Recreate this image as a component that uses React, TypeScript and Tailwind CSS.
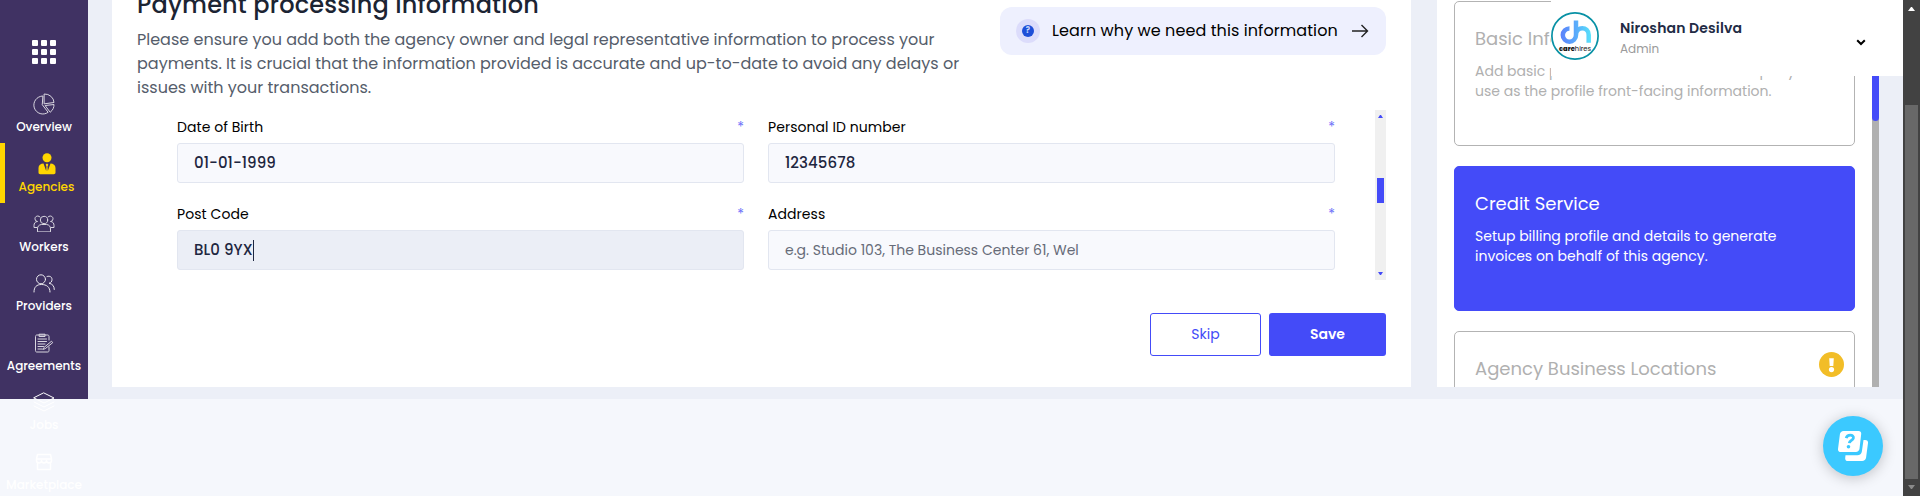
import type { ReactNode } from "react";

function Stroke({ w, h, box, children }: { w: number; h: number; box: string; children: ReactNode }) {
  return (
    <svg width={w} height={h} viewBox={box} fill="none" stroke="currentColor" strokeWidth="1" strokeLinecap="round" strokeLinejoin="round" className="shrink-0">
      {children}
    </svg>
  );
}

const PieIcon = () => (
  <Stroke w={22} h={22} box="0 0 22 22">
    <path d="M9.500 3a9 9 0 1 0 5.600 16.300L9.500 12z" />
    <path d="M11.500 1a9 9 0 0 1 9.500 8.500l-9.500 1.300z" />
    <path d="M12.500 12.500l8.500-1c0 3-1 5.500-3.500 7.500z" />
  </Stroke>
);

const AgentIcon = () => (
  <svg width="18" height="22" viewBox="0 0 18 22" fill="currentColor">
    <circle cx="9" cy="4.700" r="4.500" />
    <path d="M5.500 10.500 8.200 18l.3-4.500-.8-1.800.6-1h1.400l.6 1-.8 1.800.3 4.500 2.700-7.500c2.800 0 5 1.500 5 4.500v4.500c0 1-.7 1.700-1.700 1.700H2.200c-1 0-1.700-.7-1.700-1.700V15c0-3 2.200-4.500 5-4.500z" />
  </svg>
);

const WorkersIcon = () => (
  <Stroke w={22} h={18} box="0 0 22 18">
    <circle cx="11" cy="5" r="3.700" />
    <path d="M4.500 16.500v-2.500a4.500 4.500 0 0 1 4-4.500h5a4.500 4.500 0 0 1 4 4.500v2.500z" />
    <path d="M7 2A2.800 2.800 0 1 0 4.500 6.500C2 6.500 1 8.500 1 10.500v2h3M15 2a2.800 2.800 0 1 1 2.500 4.500c2.500 0 3.500 2 3.500 4v2h-3" />
  </Stroke>
);

const ProvidersIcon = () => (
  <Stroke w={22} h={19} box="0 0 22 19">
    <circle cx="8" cy="5.300" r="4.500" />
    <path d="M1 18c0-5 2.500-7.500 7.500-7.500S17 13 17 18M14 2.500c3-1 5 .5 5 3 0 2-1 3.500-3 3.700 3.500.8 5.300 2.800 5.300 6.300" />
  </Stroke>
);

const AgreementIcon = () => (
  <Stroke w={20} h={20} box="0 0 20 20">
    <path d="M15 7V3.500C15 2.700 14.500 2 13.700 2H2.800C2 2 1.500 2.700 1.500 3.500v14c0 1 .5 1.500 1.300 1.500h11c.800 0 1.200-.5 1.200-1.500V14M5.500 1.200h5.500v2.300H5.500z" />
    <path d="M4 6h8.500M4 8.500h8.500M4 11h7M4 13.500h5.500M4 16h4M10 14.500l7.500-6.300 1.200 1.500-7.500 6-2 .6z" />
  </Stroke>
);

const JobsIcon = () => (
  <Stroke w={22} h={20} box="0 0 22 20">
    <path d="M11 1 21 6 11 11 1 6zM1 10l10 5 10-5M1 14l10 5 10-5" />
  </Stroke>
);

const MarketIcon = () => (
  <Stroke w={18} h={18} box="0 0 18 18">
    <g strokeWidth="1.500">
      <path d="M2.500 1.500h13l1 4.500v1.500a2.500 2.500 0 0 1-5 0 2.500 2.500 0 0 1-5 0 2.500 2.500 0 0 1-5 0V6z" />
      <path d="M2.500 10.500v6h13v-6M1.500 6h15" />
    </g>
  </Stroke>
);

const navItems = [
  { label: "Overview", icon: <PieIcon />, tone: "opacity-80" },
  { label: "Agencies", icon: <AgentIcon />, tone: "opacity-100", active: true },
  { label: "Workers", icon: <WorkersIcon />, tone: "opacity-80" },
  { label: "Providers", icon: <ProvidersIcon />, tone: "opacity-90" },
  { label: "Agreements", icon: <AgreementIcon />, tone: "opacity-80" },
  { label: "Jobs", icon: <JobsIcon />, tone: "opacity-100" },
  { label: "Marketplace", icon: <MarketIcon />, tone: "opacity-100" },
];

function Sidebar() {
  return (
    <aside className="flex h-[399px] w-[88px] shrink-0 flex-col bg-[#403263] text-white">
      <div className="mt-10 ml-8 grid h-6 w-6 shrink-0 grid-cols-3 gap-[3px]">
        {Array.from({ length: 9 }, (_, i) => (
          <span key={i} className="size-1.5 rounded-[1px] bg-white" />
        ))}
      </div>
      <nav className="mt-[19px] flex flex-col">
        {navItems.map((item) => (
          <div
            key={item.label}
            className={
              item.active
                ? "flex h-[60px] shrink-0 flex-col items-center border-l-[5px] border-[#ffd600] text-[#ffd600]"
                : "flex h-[59.500px] shrink-0 flex-col items-center"
            }
          >
            <span className={`flex h-[34px] items-center pt-2 ${item.tone}`}>{item.icon}</span>
            <span className="text-[12px] leading-5 font-medium whitespace-nowrap">{item.label}</span>
          </div>
        ))}
      </nav>
    </aside>
  );
}

function Field({ label, children, focused }: { label: string; children: ReactNode; focused?: boolean }) {
  return (
    <div className="flex flex-col">
      <div className="mb-1.5 flex h-5 justify-between text-[14px] leading-5 text-black">
        <span className="tracking-[0.060px]">{label}</span>
        <span className="text-[#6d72f9]">*</span>
      </div>
      <div className={`flex h-10 items-center rounded-[3px] border border-[#e2e6f0] pl-4 ${focused ? "bg-[#ebeef6]" : "bg-[#f8f9fd]"}`}>
        {children}
      </div>
    </div>
  );
}

const Value = ({ children }: { children: ReactNode }) => (
  <span className="text-[15px] font-medium tracking-[0.080px] whitespace-nowrap text-[#1e2640]">{children}</span>
);

function PaymentCard() {
  return (
    <section className="flex h-[387px] w-[1299px] shrink-0 flex-col overflow-hidden bg-white pr-[25px] pl-[25px]">
      <div className="flex h-[110px] shrink-0 justify-between">
        <div className="-mt-3">
          <h1 className="text-[24px] leading-[34px] font-medium tracking-[0.170px] whitespace-nowrap text-[#1c2433]">Payment processing information</h1>
          <p className="mt-[6px] text-[16px] leading-6 whitespace-nowrap text-[#555d6b]">
            <span className="block">Please ensure you add both the agency owner and legal representative information to process your</span>
            <span className="block">payments. It is crucial that the information provided is accurate and up-to-date to avoid any delays or</span>
            <span className="block">issues with your transactions.</span>
          </p>
        </div>
        <div className="mt-[7px] flex h-12 w-[386px] items-center rounded-xl bg-[#eef0fe] pl-4 text-black">
          <span className="flex size-6 shrink-0 items-center justify-center rounded-full bg-[#dcdcfb]">
            <span className="flex size-3 items-center justify-center rounded-full bg-[#1d4ed8] text-[8px] font-bold text-[#c5d2f8]">?</span>
          </span>
          <span className="ml-3 w-[285px] text-[16px] leading-6 tracking-[0.080px] whitespace-nowrap">Learn why we need this information</span>
          <svg width="18" height="16" viewBox="0 0 18 16" fill="none" stroke="#222" strokeWidth="1.400" className="ml-3.5">
            <path d="M1 8h15M10.500 2l6 6-6 6" />
          </svg>
        </div>
      </div>
      <div className="flex h-[170px] shrink-0 justify-between">
        <div className="ml-10 grid w-[1158px] grid-cols-2 content-start gap-x-6 gap-y-[21px] pt-[7px]">
          <Field label="Date of Birth">
            <Value>01-01-1999</Value>
          </Field>
          <Field label="Personal ID number">
            <Value>12345678</Value>
          </Field>
          <Field label="Post Code" focused>
            <Value>BL0 9YX</Value>
            <span className="h-[21px] w-px bg-[#1e2640]" />
          </Field>
          <Field label="Address">
            <span className="text-[14px] text-[#666b78]">e.g. Studio 103, The Business Center 61, Wel</span>
          </Field>
        </div>
        <div className="flex w-[11px] flex-col items-center bg-[#f0f0f0] py-[5px]">
          <svg width="5" height="3" viewBox="0 0 5 3" fill="#444bf8"><path d="M0 3 2 0h1l2 3z" /></svg>
          <span className="mt-[60px] h-[25px] w-[7px] bg-[#444bf8]" />
          <svg width="5" height="3" viewBox="0 0 5 3" fill="#444bf8" className="mt-auto"><path d="M0 0 2 3h1l2-3z" /></svg>
        </div>
      </div>
      <div className="mt-[33px] flex justify-end gap-2 text-[14px]">
        <button className="h-[43px] w-[111px] rounded-[3px] border border-[#444bf8] text-[#444bf8]">Skip</button>
        <button className="h-[43px] w-[117px] rounded-[3px] bg-[#444bf8] font-semibold text-white">Save</button>
      </div>
    </section>
  );
}

function StepsCard() {
  return (
    <section className="ml-[26px] flex h-[387px] w-[442px] shrink-0 justify-between overflow-hidden bg-white">
      <div className="ml-[17px] flex w-[401px] flex-col gap-5 pt-px text-[14px] leading-5 whitespace-nowrap">
        <article className="h-[145px] shrink-0 rounded-[5px] border border-[#b3b3b3] pt-[23px] pl-5 text-[#b0b0b0]">
          <h2 className="text-[18px] leading-7">Basic Information</h2>
          <p className="mt-2">
            <span className="block">Add basic profile information about company to</span>
            <span className="block">use as the profile front-facing information.</span>
          </p>
        </article>
        <article className="h-[145px] shrink-0 rounded-[5px] border border-[#444bf8] bg-[#444bf8] pt-[23px] pl-5 text-white">
          <h2 className="text-[18px] leading-7">Credit Service</h2>
          <p className="mt-2">
            <span className="block">Setup billing profile and details to generate</span>
            <span className="block">invoices on behalf of this agency.</span>
          </p>
        </article>
        <article className="flex h-[145px] shrink-0 justify-between rounded-[5px] border border-[#b3b3b3] pt-5 pr-[10px] pl-5 text-[#b0b0b0]">
          <h2 className="mt-[3px] text-[18px] leading-7">Agency Business Locations</h2>
          <svg width="25" height="25" viewBox="0 0 25 25">
            <circle cx="12.500" cy="12.500" r="12.500" fill="#f2bd27" />
            <path d="M10.200 6.200h4.600l-.5 7.800h-3.600z" fill="#fff" />
            <circle cx="12.500" cy="17.600" r="2.600" fill="#fff" />
          </svg>
        </article>
      </div>
      <div className="w-[7px] bg-[#b0b0b0]">
        <div className="h-[121px] rounded-b-[4px] bg-[#444bf8]" />
      </div>
    </section>
  );
}

function UserBar() {
  return (
    <header className="absolute top-0 left-[1551px] flex h-[76px] w-[352px] bg-white">
      <div className="mt-3 size-12 shrink-0">
        <svg width="48" height="48" viewBox="0 0 48 48">
          <defs>
            <linearGradient id="brand" x1="8" y1="0" x2="40" y2="0" gradientUnits="userSpaceOnUse">
              <stop offset="0" stopColor="#5b7dfb" />
              <stop offset="0.500" stopColor="#5aa8fb" />
              <stop offset="1" stopColor="#58e2fb" />
            </linearGradient>
          </defs>
          <circle cx="24" cy="24" r="23.100" fill="#fff" stroke="#0891a5" strokeWidth="1.700" />
          <path d="M18.500 16.500A6.600 6.600 0 1 0 25 23V8.500M25 23c0-9 12.700-9 12.700 0v7.800" fill="none" stroke="url(#brand)" strokeWidth="4.500" />
          <text x="8" y="38.500" fontSize="6.500" fill="#111" textLength="32" lengthAdjust="spacingAndGlyphs">
            <tspan fontWeight="800">care</tspan>
            <tspan fontWeight="400">hires</tspan>
          </text>
        </svg>
      </div>
      <div className="ml-[21px] pt-[18px] whitespace-nowrap">
        <div className="text-[14px] leading-5 font-semibold tracking-[0.150px] text-[#222b45]">Niroshan Desilva</div>
        <div className="mt-0.5 text-[12px] leading-[18px] text-[#9b9b9b]">Admin</div>
      </div>
      <svg width="10" height="7" viewBox="0 0 10 7" fill="none" stroke="#000" strokeWidth="2" className="mt-[39px] mr-[37px] ml-auto">
        <path d="M1.200 1.200 5 5l3.800-3.800" />
      </svg>
    </header>
  );
}

export default function App() {
  return (
    <div className="relative flex h-[496px] w-[1920px] overflow-hidden bg-[#f5f7fc] font-['Poppins','Inter',sans-serif] [font-feature-settings:'cv11']">
      <Sidebar />
      <main className="flex h-[399px] w-[1815px] shrink-0 bg-[#eceff7] pl-6">
        <PaymentCard />
        <StepsCard />
      </main>
      <div className="flex w-[17px] shrink-0 flex-col items-center bg-[#424242]">
        <svg width="7" height="4" viewBox="0 0 7 4" fill="#fff" className="mt-[7px]"><path d="M0 4 3 0h1l3 4z" /></svg>
        <span className="mt-[94px] h-[374px] w-[13px] bg-[#686868]" />
        <svg width="7" height="4" viewBox="0 0 7 4" fill="#8a8a8a" className="mt-[6px]"><path d="M0 0 3 4h1l3-4z" /></svg>
      </div>
      <UserBar />
      <button className="absolute top-[416px] left-[1823px] flex size-[60px] items-center justify-center rounded-full bg-[#3bc9ff] shadow-[0_2px_14px_rgba(0,0,0,0.220)]">
        <svg width="30" height="30" viewBox="0 0 30 30" fill="#fff">
          <path d="M5.500 0h15.200c1.700 0 2.700 1.200 2.500 2.900l-1.700 14.800c-.2 1.900-1.700 3.300-3.600 3.300H2.800C1 21-.2 19.700 0 17.900L1.900 3.200C2.100 1.400 3.700 0 5.500 0z" />
          <path d="M25.500 9h1.700c1.900 0 3 1.200 2.800 3l-1.900 14.500c-.3 2.100-1.900 3.500-4 3.500H10c-1.900 0-3-1.200-2.800-3l.3-2.700h11.800c2.500 0 4.300-1.500 4.600-4z" />
          <path d="M8.200 7.200c.6-2.300 2.300-3 4.200-3 2 0 3.300 1 3 2.800-.4 2.400-3.900 2.400-4.100 5.100" fill="none" stroke="#3bc9ff" strokeWidth="2.800" />
          <circle cx="10.500" cy="15.800" r="1.800" fill="#3bc9ff" />
        </svg>
      </button>
    </div>
  );
}
